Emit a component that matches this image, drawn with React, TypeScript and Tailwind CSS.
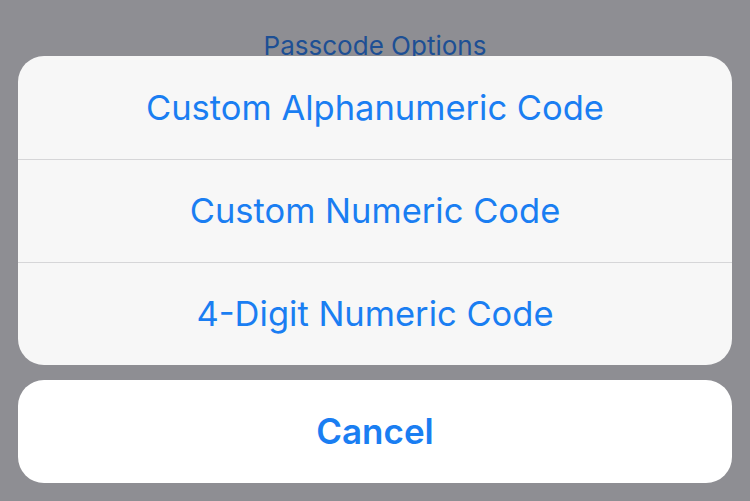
import React from 'react';

const options = ['Custom Alphanumeric Code', 'Custom Numeric Code', '4-Digit Numeric Code'];

const App: React.FC = () => {
  return (
    <div
      className="w-[750px] h-[501px] bg-[#8e8e93] overflow-hidden flex flex-col px-[18px]"
      style={{ fontFamily: 'Inter, "Liberation Sans", sans-serif' }}
    >
      {/* background title, partly hidden behind the sheet */}
      <div className="h-[56px] overflow-hidden flex justify-center">
        <span className="pt-[30px] text-[26px] leading-[32px] text-[#1d4f94]">Passcode Options</span>
      </div>
      <div className="bg-[#f7f7f7] rounded-[26px] overflow-hidden flex flex-col">
        {options.map((label, i) => (
          <div
            key={label}
            className={`h-[103px] flex items-center justify-center text-[34.5px] text-[#1a7ef2] ${
              i > 0 ? 'border-t border-[#d6d6d8]' : ''
            }`}
          >
            {label}
          </div>
        ))}
      </div>
      <div className="mt-[15px] h-[103px] bg-white rounded-[26px] flex items-center justify-center text-[35px] font-semibold text-[#1a7ef2]">
        Cancel
      </div>
    </div>
  );
};

export default App;
